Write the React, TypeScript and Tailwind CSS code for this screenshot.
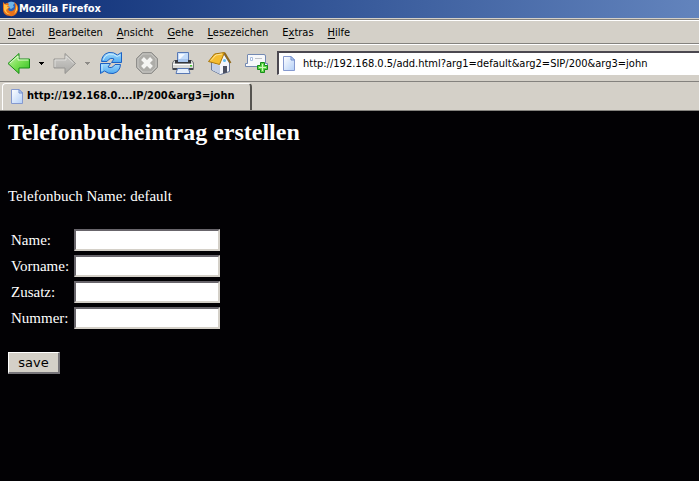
import type { ReactNode } from "react";

const menus: [string, string, string][] = [
  ["", "D", "atei"],
  ["", "B", "earbeiten"],
  ["", "A", "nsicht"],
  ["", "G", "ehe"],
  ["", "L", "esezeichen"],
  ["E", "x", "tras"],
  ["", "H", "ilfe"],
];

const fields = ["Name", "Vorname", "Zusatz", "Nummer"];

function FirefoxLogo() {
  return (
    <svg width="17" height="16" viewBox="0 0 17 16" aria-hidden="true">
      <circle cx="9" cy="7" r="6.5" fill="#2b62b8" />
      <path d="M6 2Q9-.5 13 2L11 4 12 6 9 8 6 6Z" fill="#6fb6e8" />
      <path d="M1 1L3 3Q5 1 7 3L6 5 8 6 6 8Q7 11 10 10Q14 9 13 4L12 1Q17 4 16 9Q14 16 8 15Q1 15 1 8Z" fill="#e8711a" />
      <path d="M2 3L4 4 6 4 5 6 7 6 4 9Q5 13 9 13Q4 14 2 9Z" fill="#ffc247" />
      <path d="M14 3Q17 9 12 13Q15 8 14 3Z" fill="#ffd75a" />
    </svg>
  );
}

function PageIcon() {
  return (
    <svg className="shrink-0" width="12" height="15" viewBox="0 0 12 15" aria-hidden="true">
      <defs>
        <linearGradient id="page" x1="0" y1="0" x2="1" y2="1">
          <stop offset="0" stopColor="#ffffff" />
          <stop offset="1" stopColor="#b4d0f8" />
        </linearGradient>
      </defs>
      <path d="M.5.5H8L11.500 4V14.500H.5Z" fill="url(#page)" stroke="#8599cf" />
      <path d="M8 .5V4H11.500Z" fill="#c9dcfa" stroke="#6f8ccd" />
    </svg>
  );
}

function Arrow({ forward = false }: { forward?: boolean }) {
  return (
    <svg width="24" height="23" viewBox="0 0 24 23" aria-hidden="true">
      <defs>
        <linearGradient id="green" x1="0" y1="0" x2="1" y2="1">
          <stop offset="0" stopColor="#d2f7b8" />
          <stop offset=".5" stopColor="#78e052" />
          <stop offset="1" stopColor="#2fbd22" />
        </linearGradient>
        <linearGradient id="gray" x1="0" y1="0" x2="0" y2="1">
          <stop offset="0" stopColor="#d0cfcc" />
          <stop offset="1" stopColor="#aaa9a6" />
        </linearGradient>
      </defs>
      {forward ? (
        <>
          <path d="M22.500 11.500L12 1.500V7H1V16H12V21.500Z" fill="url(#gray)" stroke="#969592" strokeLinejoin="round" />
          <path d="M2 15V8H13V4L20.500 11" fill="none" stroke="#dfdedb" />
        </>
      ) : (
        <>
          <path d="M1 11.500L12 1.500V7H22.500V16H12V21.500Z" fill="url(#green)" stroke="#198d16" strokeLinejoin="round" />
          <path d="M3 11L11 4V8H21.500" fill="none" stroke="#e3fbd5" />
        </>
      )}
    </svg>
  );
}

function Caret() {
  return (
    <svg width="5" height="3" viewBox="0 0 5 3" aria-hidden="true">
      <path d="M0 0H5V1H4V2H3V3H2V2H1V1H0Z" fill="currentColor" />
    </svg>
  );
}

function Reload() {
  return (
    <svg width="24" height="24" viewBox="0 0 24 24" aria-hidden="true">
      <defs>
        <linearGradient id="blue" x1="0" y1="0" x2="0" y2="1">
          <stop offset="0" stopColor="#a5dcfb" />
          <stop offset="1" stopColor="#4ea9f2" />
        </linearGradient>
      </defs>
      <g fill="url(#blue)" stroke="#1b61c4" strokeLinejoin="round">
        <path d="M2.500 10.500Q3 3 10 1.500Q15 1 18.500 4L22.500 1.500V11.500H12.500L15 8Q11 6 8 10.500Z" />
        <path d="M21.500 13.500Q21 21 14 22.500Q9 23 5.500 20L1.500 22.500V12.500H11.500L9 16Q13 18 16 13.500Z" />
      </g>
      <path d="M4 9Q6 4 10 3Q15 2.500 18 5.500L21 4M3 20V14" fill="none" stroke="#c8ecff" />
    </svg>
  );
}

function Stop() {
  return (
    <svg width="24" height="24" viewBox="0 0 24 24" aria-hidden="true">
      <path d="M7.500 1.500H16.500L22.500 7.500V16.500L16.500 22.500H7.500L1.500 16.500V7.500Z" fill="#aeada9" stroke="#8f8e8b" />
      <path d="M8 3H16L21 8V16L16 21H8L3 16V8Z" fill="none" stroke="#c6c5c1" />
      <path d="M7.500 7.500L16.500 16.500M16.500 7.500L7.500 16.500" stroke="#f5f5f3" strokeWidth="4" />
    </svg>
  );
}

function Printer() {
  return (
    <svg width="24" height="24" viewBox="0 0 24 24" aria-hidden="true">
      <path d="M6.500 1.500H17.500V11H6.500Z" fill="#c4dcfa" stroke="#5878b4" />
      <path d="M8 3H14L8 9Z" fill="#f3f8ff" />
      <path d="M1.500 12L3 9.500H21L22.500 12V18.500H1.500Z" fill="#d9dad8" stroke="#74777a" />
      <path d="M4 9H20V12.500H4Z" fill="#34373d" />
      <path d="M7 8H17V11H7Z" fill="#a9c6ee" />
      <path d="M2 13.500H22" stroke="#fff" />
      <path d="M2 17H22V19H2Z" fill="#42464d" />
      <path d="M6.500 17.500H17.500L19 22.500H5Z" fill="#e5effc" stroke="#5878b4" />
      <path d="M19 14H21V15.500H19Z" fill="#48c833" />
    </svg>
  );
}

function Home() {
  return (
    <svg width="25" height="25" viewBox="0 0 25 25" aria-hidden="true">
      <path d="M4.500 11V19L13.500 23.500L22.500 20.500V12L17 3Z" fill="#f3f5fa" stroke="#68799b" />
      <path d="M5 12L13 14.500V23L5 19Z" fill="#c5d0e4" />
      <path d="M16 15H20V21.500L16 22.500Z" fill="#4b5061" />
      <circle cx="17.500" cy="9.500" r="1.500" fill="#5ebcf0" />
      <path d="M1.500 10.500L7.500 3L17.500 1.500L12.500 13.500Z" fill="#f5bd31" stroke="#a87508" strokeLinejoin="round" />
      <path d="M4 9.500L9 4L15 3" fill="none" stroke="#ffe69a" />
      <path d="M17.500 2L23.500 12" stroke="#906719" strokeWidth="2" />
    </svg>
  );
}

function NewTab() {
  return (
    <svg width="25" height="22" viewBox="0 0 25 22" aria-hidden="true">
      <path d="M1.500 14.500V11.500H3.500V3Q3.500 2.500 4 2.500H20Q21.500 2.500 21.500 4V11.500H23.500V14.500Z" fill="#f7f8fa" stroke="#7389b2" />
      <path d="M6.500 5.500H8.500V8.500H6.500Z" fill="#fff" stroke="#a9bde0" />
      <path d="M11 6.500H18" stroke="#bec2c9" />
      <path d="M16.500 10.500H20.500V13.500H23.500V17.500H20.500V20.500H16.500V17.500H13.500V13.500H16.500Z" fill="#60d64a" stroke="#168e19" />
      <path d="M18.500 12V19M15 15.500H22" stroke="#cff8ba" />
    </svg>
  );
}

function Tool({ label, children }: { label: string; children: ReactNode }) {
  return (
    <button type="button" aria-label={label} className="flex shrink-0 items-center justify-center">
      {children}
    </button>
  );
}

export default function App() {
  return (
    <div className="flex min-h-screen flex-col bg-[#020104] text-black">
      <header className="overflow-hidden bg-[#d4d0c8] font-['DejaVu_Sans_Condensed','DejaVu_Sans',sans-serif] text-[11px]">
        <div className="flex h-[18px] items-center bg-linear-to-r from-[#0d2e76] to-[#6384bd] pl-0.5 text-white">
          <FirefoxLogo />
          <span className="font-bold">Mozilla Firefox</span>
        </div>
        <div className="border-t border-[#d4d0c8] bg-[#84827e] pt-px">
          <nav className="flex h-6 items-center gap-3.5 border-t border-b border-t-white border-b-[#84827e] bg-[#d4d0c8] pt-0.5 pl-2">
            {menus.map(([before, key, after]) => (
              <button type="button" key={key}>
                {before}
                <span className="underline underline-offset-2">{key}</span>
                {after}
              </button>
            ))}
          </nav>
        </div>
        <div className="flex h-[38px] items-center border-t border-b border-t-white border-b-[#84827e] pl-[7px]">
          <div className="flex shrink-0 items-center gap-2">
            <Tool label="Zurück"><Arrow /></Tool>
            <Tool label="Verlauf zurück"><Caret /></Tool>
          </div>
          <div className="ml-[9px] flex shrink-0 items-center gap-2 text-[#8d8b87]">
            <Tool label="Vor"><Arrow forward /></Tool>
            <Tool label="Verlauf vor"><Caret /></Tool>
          </div>
          <div className="ml-[9px] flex shrink-0 items-center gap-3">
            <Tool label="Neu laden"><Reload /></Tool>
            <Tool label="Stopp"><Stop /></Tool>
            <Tool label="Drucken"><Printer /></Tool>
            <Tool label="Startseite"><Home /></Tool>
            <Tool label="Neuer Tab"><NewTab /></Tool>
          </div>
          <label className="ml-2 flex h-6 grow items-center gap-2 border-t-2 border-b border-l-2 border-t-[#4b4850] border-b-white border-l-[#4b4850] bg-white pl-1">
            <PageIcon />
            <input
              aria-label="Adresse"
              className="min-w-0 grow bg-transparent pt-0.5 outline-none"
              defaultValue="http://192.168.0.5/add.html?arg1=default&arg2=SIP/200&arg3=john"
            />
          </label>
        </div>
        <div className="flex h-[29px] border-b border-[#84827e] pt-px pl-0.5">
          <button
            type="button"
            className="flex items-center gap-1 rounded-t-sm border-t border-r-2 border-l border-t-white border-r-[#55534f] border-l-white pr-4 pb-0.5 pl-2 font-bold"
          >
            <PageIcon />
            <span>http://192.168.0....IP/200&amp;arg3=john</span>
          </button>
        </div>
      </header>
      <main className="px-2 pt-[7px] font-['Liberation_Serif',serif] text-[15px] text-white">
        <h1 className="text-2xl leading-7 font-bold">Telefonbucheintrag erstellen</h1>
        <p className="mt-10 leading-5">Telefonbuch Name: default</p>
        <form onSubmit={(event) => event.preventDefault()}>
          <div className="mt-[23px] grid grid-cols-[max-content_auto] items-center justify-start gap-x-[5px] gap-y-1 pl-[3px]">
            {fields.map((name) => (
              <label key={name} className="contents">
                <span className="leading-5">{name}:</span>
                <input className="h-[22px] w-[146px] border-2 border-t-[#68656b] border-r-[#d4d0c8] border-b-[#d4d0c8] border-l-[#68656b] bg-white px-1 text-sm text-black outline-none" />
              </label>
            ))}
          </div>
          <button
            type="submit"
            className="mt-[23px] flex h-[22px] w-[52px] items-center justify-center border-t border-r-2 border-b-2 border-l border-t-white border-r-[#77757a] border-b-[#77757a] border-l-white bg-[#d4d0c8] pt-px font-['DejaVu_Sans',sans-serif] text-[13px] text-black"
          >
            save
          </button>
        </form>
      </main>
    </div>
  );
}
